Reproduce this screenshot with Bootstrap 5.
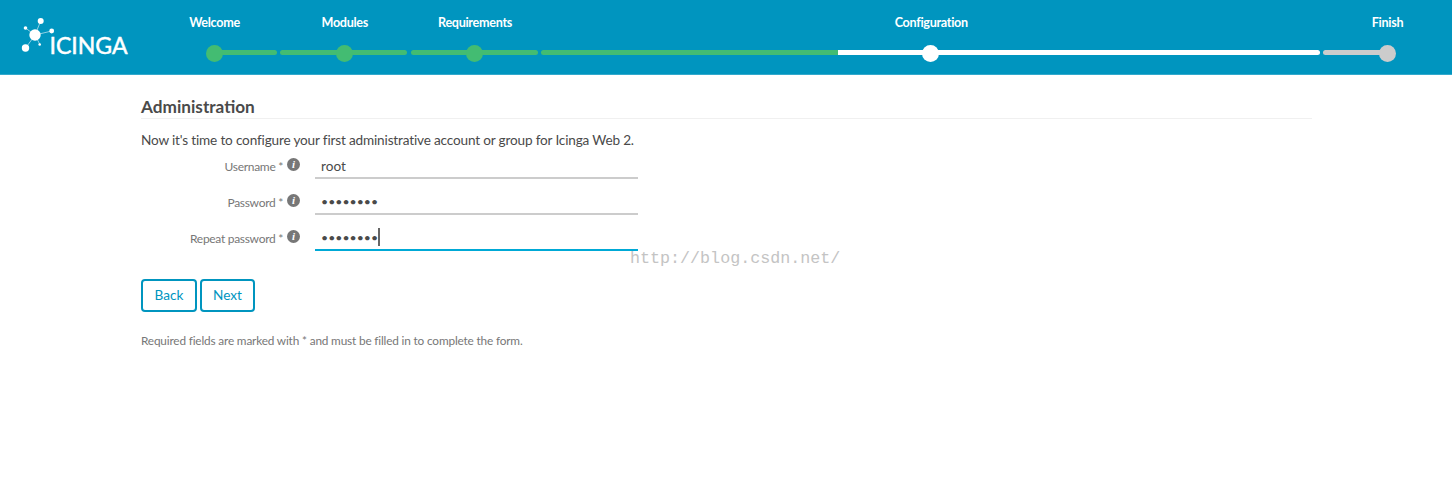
<!DOCTYPE html>
<html lang="en">
<head>
<meta charset="utf-8">
<title>Icinga Web 2 Setup</title>
<link href="https://cdn.jsdelivr.net/npm/bootstrap@5.3.0/dist/css/bootstrap.min.css" rel="stylesheet">
<style>
html,body{height:495px;overflow:hidden}
body{font-family:Lato,"Liberation Sans",sans-serif;color:#4a4a4a;background:#fff;position:relative}
.topbar{height:75px;background:#0095bf;border-bottom:1px solid #33a9cc}
.logo-box{width:150px;flex:none}
.logo-box svg{display:block;margin:0}
.logo-word{font-family:Lato,sans-serif;font-weight:400;font-size:24px;fill:#fff;stroke:#fff;stroke-width:.5px}
.steps{gap:3.25px;list-style:none;margin:0;padding:0;flex:1;min-width:0}
.step{width:127px;flex:none;color:#fff;font-size:12.6px;font-weight:700;letter-spacing:-.3px;text-align:center}
.step-wide{width:779px}
.step-label{height:50px;padding:15px 0 0 2px;line-height:16px}
.track{height:5px;border-radius:3px;position:relative;background:#43bc72}
.track-half-right{margin-left:50%;border-radius:0 3px 3px 0}
.track-half-left{width:56%;background:#ccc;border-radius:3px 0 0 3px}
.track-split{background:linear-gradient(to right,#43bc72 297px,#fff 297px)}
.track-wrap{position:relative;height:5px}
.dot{position:absolute;left:50%;top:-5px;width:17px;height:17px;margin-left:-8px;border-radius:50%;background:#43bc72}
.dot-white{background:#fff}
.dot-grey{background:#ccc}
.page{padding:0 141px}
.sect-title{font-size:17.2px;font-weight:700;line-height:22px;margin:21px 0 0;height:23px;border-bottom:1px solid #f0f0f0;width:1171px;color:#4a4a4a}
.intro{font-size:13.6px;letter-spacing:-.17px;line-height:18px;margin:12px 0 0}
.frow{height:36.2px;width:497px}
.flabel{width:142px;flex:none;text-align:right;font-size:12px;letter-spacing:-.3px;color:#777;margin:0;padding-top:5px;font-weight:400}
.info{width:13px;height:13px;border-radius:50%;background:#777;color:#fff;flex:none;margin-left:4px;margin-top:5px;font:italic 700 11px/13px "Liberation Serif",serif;text-align:center}
.fctl{width:323px;flex:none;margin-left:15px;position:relative}
.fctl .form-control{border:0;border-bottom:2px solid #ccc;border-radius:0;height:26px;padding:1px 6px 0;font-size:13.6px;line-height:22px;color:#4a4a4a;background:transparent;box-shadow:none}
.fctl .pw{letter-spacing:0;font-size:12.3px}
.fctl .is-focused{border-bottom-color:#00a9d6}
.caret-mark{position:absolute;left:63px;top:3px;width:2px;height:18px;background:#666}
.actions{gap:3px;margin-top:17px}
.act-btn{--bs-btn-color:#0095bf;--bs-btn-border-color:#0095bf;--bs-btn-hover-color:#0095bf;--bs-btn-hover-bg:#fff;--bs-btn-hover-border-color:#0095bf;border-width:2px;border-radius:4px;height:33px;padding:0;font-size:13.6px;line-height:29px;font-weight:400}
.act-back{width:56px}
.act-next{width:55px}
.note{font-size:11.8px;letter-spacing:-.16px;color:#777;margin:21px 0 0;line-height:16px}
.wmark{position:absolute;left:630px;top:249px;font-family:"Liberation Mono",monospace;font-size:16.7px;line-height:20px;color:#c4c4c4;white-space:nowrap}
</style>
</head>
<body>
<header class="topbar d-flex">
  <div class="logo-box">
    <svg width="150" height="74" viewBox="0 0 150 74">
      <g stroke="#8fd0e4" stroke-width="1" fill="none">
        <path d="M35 35 40.7 21M35 35 25 27.7M35 35 51.7 31M35 35 25.7 48M35 35 40 44.7"/>
      </g>
      <g fill="#fff">
        <circle cx="35" cy="35" r="5.7"/>
        <circle cx="40.7" cy="21" r="3"/>
        <circle cx="25.5" cy="28" r="1.8"/>
        <circle cx="51.7" cy="31" r="2.4"/>
        <circle cx="25.5" cy="48" r="3.7"/>
        <circle cx="39.7" cy="44.5" r="1.3"/>
      </g>
      <text class="logo-word" x="49.5" y="54" textLength="78" lengthAdjust="spacingAndGlyphs">ICINGA</text>
    </svg>
  </div>
  <ol class="steps d-flex">
    <li class="step">
      <div class="step-label">Welcome</div>
      <div class="track-wrap"><div class="track track-half-right"></div><span class="dot"></span></div>
    </li>
    <li class="step">
      <div class="step-label">Modules</div>
      <div class="track-wrap"><div class="track"></div><span class="dot"></span></div>
    </li>
    <li class="step">
      <div class="step-label">Requirements</div>
      <div class="track-wrap"><div class="track"></div><span class="dot"></span></div>
    </li>
    <li class="step step-wide">
      <div class="step-label">Configuration</div>
      <div class="track-wrap"><div class="track track-split"></div><span class="dot dot-white"></span></div>
    </li>
    <li class="step">
      <div class="step-label">Finish</div>
      <div class="track-wrap"><div class="track track-half-left"></div><span class="dot dot-grey"></span></div>
    </li>
  </ol>
</header>
<main class="page">
  <h2 class="sect-title">Administration</h2>
  <p class="intro">Now it's time to configure your first administrative account or group for Icinga Web 2.</p>
  <form class="mt-1">
    <div class="frow d-flex align-items-start">
      <label class="flabel" for="f-user">Username *</label><span class="info">i</span>
      <div class="fctl"><input id="f-user" class="form-control" type="text" value="root"></div>
    </div>
    <div class="frow d-flex align-items-start">
      <label class="flabel" for="f-pass">Password *</label><span class="info">i</span>
      <div class="fctl"><input id="f-pass" class="form-control pw" type="password" value="password"></div>
    </div>
    <div class="frow d-flex align-items-start">
      <label class="flabel" for="f-rep">Repeat password *</label><span class="info">i</span>
      <div class="fctl"><input id="f-rep" class="form-control pw is-focused" type="password" value="password"><span class="caret-mark"></span></div>
    </div>
    <div class="actions d-flex">
      <button type="button" class="btn act-btn act-back">Back</button>
      <button type="button" class="btn act-btn act-next">Next</button>
    </div>
  </form>
  <p class="note">Required fields are marked with * and must be filled in to complete the form.</p>
</main>
<div class="wmark">http://blog.csdn.net/</div>
<script src="https://cdn.jsdelivr.net/npm/bootstrap@5.3.0/dist/js/bootstrap.bundle.min.js"></script>
</body>
</html>
